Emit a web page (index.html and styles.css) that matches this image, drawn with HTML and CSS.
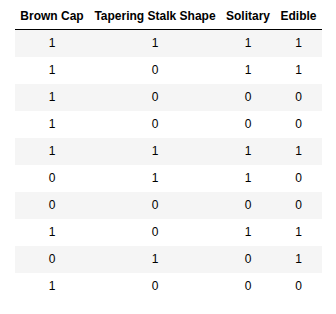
FILE: index.html
```
<!DOCTYPE html>
<html lang="en">

<head>
    <meta charset="UTF-8">
    <link rel="stylesheet" href="styles.css">
    <title>Mushrooms</title>
</head>

<body>
    <table class="dataframe">
        <colgroup>
            <col class="c-cap">
            <col class="c-stalk">
            <col class="c-solitary">
            <col class="c-edible">
        </colgroup>
        <thead>
            <tr>
                <th>Brown Cap</th>
                <th>Tapering Stalk Shape</th>
                <th>Solitary</th>
                <th>Edible</th>
            </tr>
        </thead>
        <tbody>
            <tr><td>1</td><td>1</td><td>1</td><td>1</td></tr>
            <tr><td>1</td><td>0</td><td>1</td><td>1</td></tr>
            <tr><td>1</td><td>0</td><td>0</td><td>0</td></tr>
            <tr><td>1</td><td>0</td><td>0</td><td>0</td></tr>
            <tr><td>1</td><td>1</td><td>1</td><td>1</td></tr>
            <tr><td>0</td><td>1</td><td>1</td><td>0</td></tr>
            <tr><td>0</td><td>0</td><td>0</td><td>0</td></tr>
            <tr><td>1</td><td>0</td><td>1</td><td>1</td></tr>
            <tr><td>0</td><td>1</td><td>0</td><td>1</td></tr>
            <tr><td>1</td><td>0</td><td>0</td><td>0</td></tr>
        </tbody>
    </table>
</body>

</html>
```

FILE: styles.css
```
* {
    margin: 0;
    padding: 0;
    box-sizing: border-box;
}

body {
    background: #fff;
    font-family: "Liberation Sans", Arial, sans-serif;
    font-size: 12px;
    color: #000;
}

.dataframe {
    border-collapse: collapse;
    table-layout: fixed;
    width: 307px;
    margin: 3px 0 0 15px;
}

.c-cap { width: 74px; }
.c-stalk { width: 132px; }
.c-solitary { width: 54px; }
.c-edible { width: 47px; }

.dataframe th {
    font-weight: bold;
    line-height: 14px;
    padding: 6px 0;
    border-bottom: 1px solid #000;
    text-align: center;
    white-space: nowrap;
}

.dataframe td {
    line-height: 15px;
    padding: 6px 0;
    text-align: center;
}

.dataframe tbody tr:nth-child(odd) {
    background: #f5f5f5;
}
```
